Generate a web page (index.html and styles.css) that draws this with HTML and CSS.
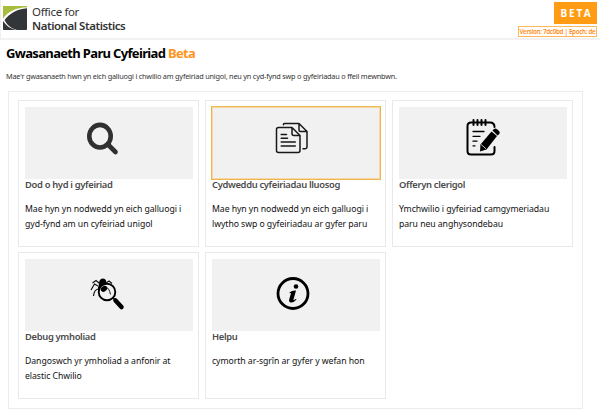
FILE: index.html
```
<!DOCTYPE html>
<html lang="cy">
<head>
<meta charset="utf-8">
<title>Gwasanaeth Paru Cyfeiriad</title>
<link rel="stylesheet" href="styles.css">
</head>
<body>
<header class="header">
  <div class="brand">
    <svg class="logo" width="24" height="24" viewBox="0 0 24 24">
      <rect width="24" height="24" rx=".8" fill="#333638"/>
      <path d="M0 0H24V1.500C14 2 4 7 0 13Z" fill="#a8bd3a"/>
      <path d="M0 12.500C5 5.500 13 1.500 24 1.200V2.200C14 3 6.500 7.500 1.500 14C4 19 8 22.500 14 24H12.500C7 22.500 3 19.500 0 15Z" fill="#fff"/>
    </svg>
    <div class="brand-name"><span class="b1">Office for</span><strong class="b2">National Statistics</strong></div>
  </div>
  <div class="release">
    <div class="beta">BETA</div>
    <div class="version"><span>Version: 7dc0bd | Epoch: de</span></div>
  </div>
</header>
<main>
  <h1><span>Gwasanaeth Paru Cyfeiriad</span> <span class="accent">Beta</span></h1>
  <p class="intro"><span>Mae'r gwasanaeth hwn yn eich galluogi i chwilio am gyfeiriad unigol, neu yn cyd-fynd swp o gyfeiriadau o ffeil mewnbwn.</span></p>
  <section class="cards">
    <article class="card">
      <div class="thumb"><svg class="i-search" width="60" height="50" viewBox="0 0 60 50" fill="none" stroke="#303030">
        <ellipse cx="30" cy="26.200" rx="10.700" ry="11.300" stroke-width="4.600"/><path d="M38 34.500L45.500 42" stroke-width="4.600" stroke-linecap="round"/></svg></div>
      <h2>Dod o hyd i gyfeiriad</h2>
      <p>Mae hyn yn nodwedd yn eich galluogi i<br>gyd-fynd am un cyfeiriad unigol</p>
    </article>
    <article class="card active">
      <div class="thumb"><svg class="i-copy" width="50" height="50" viewBox="0 0 50 50" fill="none" stroke="#181818" stroke-width="1.500" stroke-linejoin="round" stroke-linecap="round">
        <path d="M18.500 14.700V14Q18.500 13.500 20 13.500H34L42 21.500V37Q42 38.700 40.300 38.700H38M34 13.500V20Q34 21.500 35.500 21.500H42"/>
        <path d="M13.500 17.500H27L35 25.500V40.500Q35 42.500 33 42.500H13.500Q11.500 42.500 11.500 40.500V19.500Q11.500 17.500 13.500 17.500ZM27 17.500V23.500Q27 25.500 29 25.500H35M16.200 24.500H21.500M16.200 28.200H22.500M16.200 32H30.300M16.200 36H30.300"/></svg></div>
      <h2>Cydweddu cyfeiriadau lluosog</h2>
      <p>Mae hyn yn nodwedd yn eich galluogi i<br>lwytho swp o gyfeiriadau ar gyfer paru</p>
    </article>
    <article class="card">
      <div class="thumb"><svg class="i-note" width="60" height="50" viewBox="0 0 60 50">
        <g fill="none" stroke="#000" stroke-linecap="round">
        <path d="M17 12.500H16Q12.500 12.500 12.500 16V41Q12.500 44.500 16 44.500H36Q39.500 44.500 39.500 41V37M17 12.500H35Q39.500 12.500 39.500 17" stroke-width="2"/>
        <path d="M18.500 10V15M22.500 10V15M26.500 10V15M30.500 10V15" stroke-width="2"/>
        <path d="M18 21.500H29M18 26.300H25M18 31.200H22M18 35.800H20" stroke-width="1.300"/></g>
        <path d="M25 41.500L25.500 34.500L36.500 21.500L42 26L31.500 39.500Z"/>
        <path d="M37.500 20.500L39 19Q40.500 18 42 19.200L44 21Q45.500 22.500 44.300 24L42.600 25.500Z"/>
        <path d="M26 34.400L31 38.800" stroke="#f1f1f1" stroke-width=".8"/></svg></div>
      <h2>Offeryn clerigol</h2>
      <p>Ymchwilio i gyfeiriad camgymeriadau<br>paru neu anghysondebau</p>
    </article>
    <article class="card">
      <div class="thumb"><svg class="i-bug" width="60" height="50" viewBox="0 0 60 50">
        <ellipse cx="22.500" cy="15" rx="3.500" ry="4.500" transform="rotate(20 22.500 15)"/>
        <path d="M18 19Q20 14 25 15L30 19L25 27Q17 26 18 19Z"/>
        <g fill="none" stroke="#111" stroke-width="1.200">
        <path d="M19 15L16 12.500L12.500 15M18 18L14.500 16L11 22M18 21Q14 22 13.500 28M26 15L29 13L32 15.500"/></g>
        <circle cx="27" cy="24" r="8.300" fill="#f1f1f1" stroke="#000" stroke-width="1.900"/>
        <ellipse cx="24" cy="20.800" rx="3.500" ry="2.600" transform="rotate(-35 24 20.800)"/>
        <path d="M26 19.500Q29 19.500 30.500 26.500" fill="none" stroke="#111"/>
        <path d="M33 30L42 39" stroke="#000" stroke-width="1.500"/>
        <path d="M35.500 32.500L41.500 39" stroke="#000" stroke-width="4.500" stroke-linecap="round"/></svg></div>
      <h2>Debug ymholiad</h2>
      <p>Dangoswch yr ymholiad a anfonir at<br>elastic Chwilio</p>
    </article>
    <article class="card">
      <div class="thumb"><svg class="i-info" width="50" height="50" viewBox="0 0 50 50">
        <circle cx="28" cy="25.500" r="15" fill="none" stroke="#000" stroke-width="2.800"/>
        <circle cx="31" cy="18.500" r="2.300"/>
        <path d="M24.500 24.500Q27 22.200 31 22.500L28.500 31.500Q28.200 33.200 31 30.800L31.500 31.500Q28.500 35 25.500 34.500Q23.500 34 24.300 31L25.800 26Q26.200 24.300 24.800 25.200Z"/></svg></div>
      <h2>Helpu</h2>
      <p>cymorth ar-sgrîn ar gyfer y wefan hon</p>
    </article>
  </section>
</main>
</body>
</html>
```
FILE: styles.css
```
* { box-sizing: border-box; }
body { margin: 0; width: 600px; height: 416px; background: #fff; color: #111; font-family: "Noto Sans", sans-serif; overflow: hidden; }
.header { display: flex; justify-content: space-between; height: 40px; padding: 2px 3px 0 3px; border-bottom: 2px solid #f2f2f2; border-left: 1px solid #eee; }
.brand { display: flex; gap: 5px; padding-top: 4px; margin-left: -1px; }
.logo { flex: none; }
.brand-name { display: flex; flex-direction: column; margin-top: -1px; color: #333; font-size: 11.5px; line-height: 14px; white-space: nowrap; }
.b1 { letter-spacing: -.35px; }
.b2 { font-weight: 600; letter-spacing: -.45px; }
.release { display: flex; flex-direction: column; align-items: flex-end; gap: 1.500px; }
.beta { width: 43px; height: 22px; background: #ff9c14; color: #fff; font-size: 10px; font-weight: 700; line-height: 23px; letter-spacing: 2px; text-align: center; padding-left: 2px; }
.version { width: 79px; height: 11px; border: 1px solid #ffb75b; color: #ff8a10; font-size: 6.200px; font-weight: 600; line-height: 9px; display: flex; justify-content: center; white-space: nowrap; letter-spacing: -.28px; }
h1 { margin: 3px 0 0 6px; font-size: 13px; font-weight: 700; line-height: 20px; color: #000; letter-spacing: -.66px; white-space: nowrap; }
.accent { color: #ff9421; }
.intro { margin: 7px 0 0 6px; font-size: 7.300px; line-height: 12px; letter-spacing: -.2px; color: #333; white-space: nowrap; }
.cards { display: grid; grid-template-columns: repeat(3, 181px); grid-auto-rows: 147px; gap: 5px 6px; width: 575px; height: 318px; margin: 9px 0 0 8px; padding: 8px 9px; border: 1px solid #ececec; }
.card { border: 1px solid #e9e9ec; padding: 6px; }
.thumb { display: flex; align-items: center; justify-content: center; width: 168px; height: 72px; background: #f1f1f1; }
.thumb svg { flex: none; }
.i-search { margin: -17px 0 0 -18px; }
.i-copy { margin: -17px 0 0 -13px; }
.i-note { margin: -17px 0 0 4px; }
.i-bug { margin: -5px 0 0 2px; }
.i-info { margin: -5px 0 0 -12px; }
.active .thumb { box-shadow: 0 0 0 1px #edb64f, inset 0 0 0 1px #f5d9a3; }
h2 { margin: 0; font-size: 9.400px; font-weight: 600; line-height: 12px; color: #4c4c4c; letter-spacing: -.33px; white-space: nowrap; }
.card p { margin: 11px 0 0; font-size: 8.700px; line-height: 14.500px; color: #111; letter-spacing: -.06px; white-space: nowrap; }
```
